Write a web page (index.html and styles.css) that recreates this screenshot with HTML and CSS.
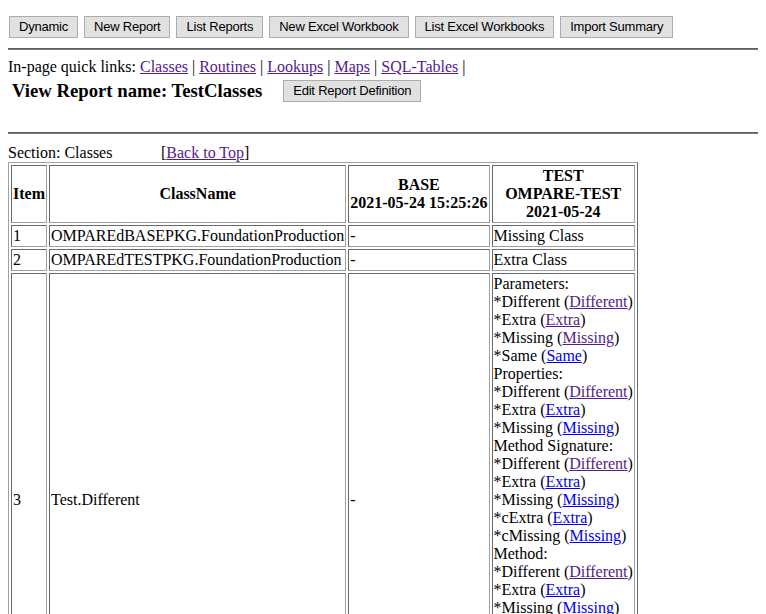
FILE: index.html
```html
<!DOCTYPE html>
<html>
<head>
<meta charset="utf-8">
<title>View Report</title>
<link rel="stylesheet" href="styles.css">
</head>
<body>
<div class="toolbar" id="top">
  <button class="btn">Dynamic</button>
  <button class="btn">New Report</button>
  <button class="btn">List Reports</button>
  <button class="btn">New Excel Workbook</button>
  <button class="btn">List Excel Workbooks</button>
  <button class="btn">Import Summary</button>
</div>
<hr class="rule rule-top">
<div class="quick">In-page quick links: <a class="v" href="#classes">Classes</a> | <a class="v" href="#routines">Routines</a> | <a class="v" href="#lookups">Lookups</a> | <a class="v" href="#maps">Maps</a> | <a class="v" href="#sqltables">SQL-Tables</a> |</div>
<div class="title-row">
  <h3 class="title">View Report name: TestClasses</h3>
  <button class="btn">Edit Report Definition</button>
</div>
<hr class="rule rule-mid">
<div class="section" id="classes"><span class="section-label">Section: Classes</span><span>[<a class="v" href="#top">Back to Top</a>]</span></div>
<table class="grid">
  <tr>
    <th>Item</th>
    <th>ClassName</th>
    <th>BASE<br>2021-05-24 15:25:26</th>
    <th>TEST<br>OMPARE-TEST<br>2021-05-24</th>
  </tr>
  <tr>
    <td>1</td>
    <td>OMPAREdBASEPKG.FoundationProduction</td>
    <td>-</td>
    <td>Missing Class</td>
  </tr>
  <tr>
    <td>2</td>
    <td>OMPAREdTESTPKG.FoundationProduction</td>
    <td>-</td>
    <td>Extra Class</td>
  </tr>
  <tr>
    <td>3</td>
    <td>Test.Different</td>
    <td>-</td>
    <td>Parameters:<br>
*Different (<a class="v" href="#d1">Different</a>)<br>
*Extra (<a class="v" href="#e1">Extra</a>)<br>
*Missing (<a class="v" href="#m1">Missing</a>)<br>
*Same (<a href="#s1">Same</a>)<br>
Properties:<br>
*Different (<a class="v" href="#d2">Different</a>)<br>
*Extra (<a href="#e2">Extra</a>)<br>
*Missing (<a href="#m2">Missing</a>)<br>
Method Signature:<br>
*Different (<a class="v" href="#d3">Different</a>)<br>
*Extra (<a href="#e3">Extra</a>)<br>
*Missing (<a href="#m3">Missing</a>)<br>
*cExtra (<a href="#e4">Extra</a>)<br>
*cMissing (<a href="#m4">Missing</a>)<br>
Method:<br>
*Different (<a class="v" href="#d5">Different</a>)<br>
*Extra (<a href="#e5">Extra</a>)<br>
*Missing (<a href="#m5">Missing</a>)<br>
*cExtra (<a href="#e6">Extra</a>)<br>
*cMissing (<a href="#m6">Missing</a>)<br>
*Same (<a href="#s6">Same</a>)<br>
Query:<br>
*Different (<a href="#d7">Different</a>)<br>
*Extra (<a href="#e7">Extra</a>)</td>
  </tr>
</table>
</body>
</html>
```

FILE: styles.css
```css
html {
  background: #ffffff;
}

body {
  margin: 8px;
  font-family: "Liberation Serif", "Times New Roman", serif;
  font-size: 16px;
  color: #000000;
}

a {
  color: #0000ee;
  text-decoration: underline;
}

a.v {
  color: #551a8b;
}

.toolbar {
  display: flex;
  gap: 6px;
  margin: 8px 0 0 1px;
}

.btn {
  font-family: "Liberation Sans", Arial, sans-serif;
  font-size: 13px;
  letter-spacing: -0.22px;
  color: #000000;
  background: #e1e1e1;
  border: 1px solid #adadad;
  border-radius: 0;
  height: 22px;
  padding: 0 9px;
  margin: 0;
  line-height: 20px;
}

.rule {
  box-sizing: border-box;
  height: 2px;
  border: 0;
  border-top: 1px solid #5f5f5f;
  border-bottom: 1px solid #7a7a7a;
  margin: 0;
}

.rule-top {
  margin-top: 10px;
}

.quick {
  margin-top: 8px;
}

.title-row {
  display: flex;
  align-items: center;
  gap: 21px;
  margin-top: 3px;
  padding-left: 4px;
  height: 23px;
}

.title {
  font-size: 18.72px;
  font-weight: bold;
  margin: 0;
}

.rule-mid {
  margin-top: 30px;
}

.section {
  display: flex;
  margin-top: 10px;
}

.section-label {
  width: 153px;
}

.grid {
  border-collapse: separate;
  border-spacing: 2px;
  border-style: solid;
  border-width: 1px;
  border-color: #a0a0a0 #696969 #696969 #a0a0a0;
  line-height: 18px;
}

.grid th,
.grid td {
  padding: 1px;
  border-style: solid;
  border-width: 1px;
  border-color: #696969 #a0a0a0 #a0a0a0 #696969;
  vertical-align: middle;
}

.grid th {
  font-weight: bold;
  text-align: center;
}

.grid td {
  text-align: left;
}
```
